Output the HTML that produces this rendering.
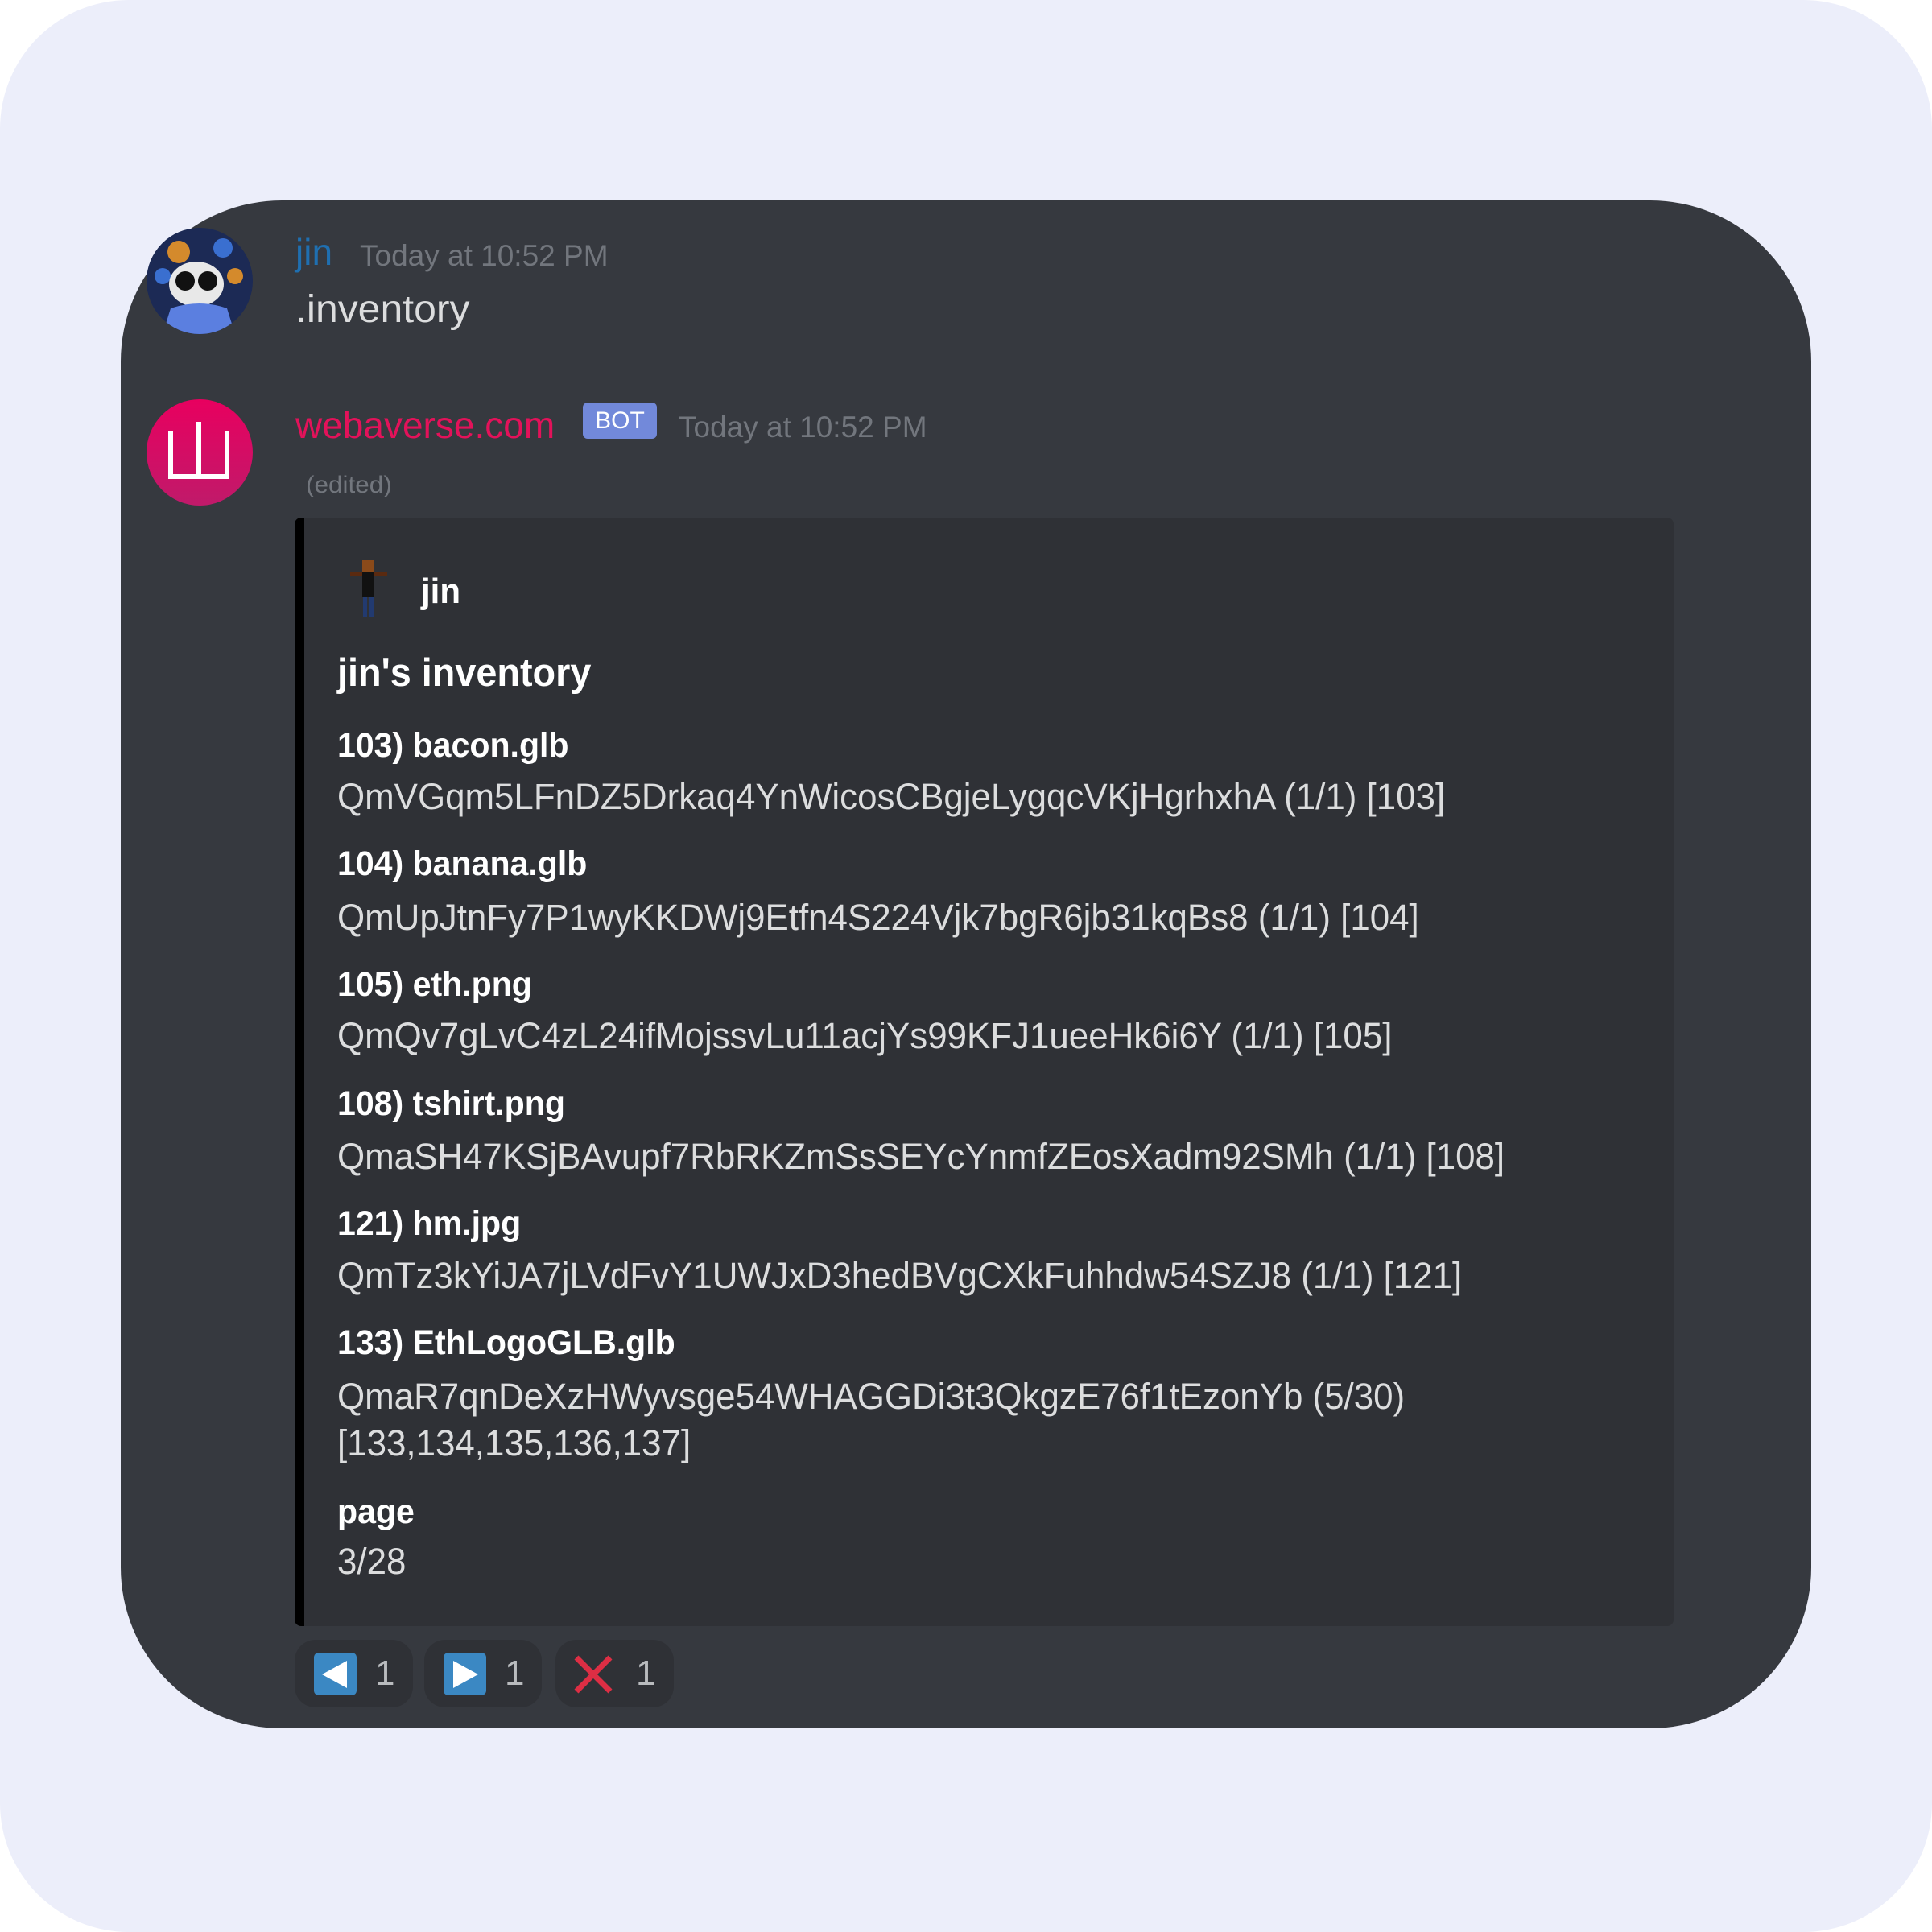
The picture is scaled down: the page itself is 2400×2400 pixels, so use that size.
<!DOCTYPE html>
<html><head><meta charset="utf-8"><style>
html,body{margin:0;padding:0;background:#fff;}
body{width:2400px;height:2400px;position:relative;overflow:hidden;font-family:"Liberation Sans",sans-serif;}
.bg{position:absolute;left:0;top:0;width:2400px;height:2400px;background:#eceefa;border-radius:160px;}
.card{position:absolute;left:150px;top:249px;width:2100px;height:1898px;background:#36393f;border-radius:200px;}
.t{position:absolute;white-space:nowrap;line-height:1;transform-origin:left center;}
.v{color:#dcddde;font-size:45px;transform:scaleX(0.975);}
.n{color:#fff;font-size:43px;font-weight:bold;transform:scaleX(0.955);}
.embed{position:absolute;left:366px;top:643px;width:1713px;height:1377px;background:#2f3136;border-radius:8px;border-left:12px solid #000;box-sizing:border-box;}
.btn{position:absolute;top:2037px;height:84px;background:#2f3136;border-radius:26px;}
.ico{position:absolute;left:24px;top:16px;width:53px;height:53px;background:#3b88c3;border-radius:6px;}
.num{position:absolute;left:100px;top:20px;font-size:44px;color:#b9bbbe;line-height:1;}
</style></head><body>
<div class="bg"></div>
<div class="card"></div>

<svg style="position:absolute;left:182px;top:283px" width="132" height="132" viewBox="0 0 132 132">
<defs><clipPath id="c1"><circle cx="66" cy="66" r="66"/></clipPath></defs>
<g clip-path="url(#c1)">
<rect width="132" height="132" fill="#1c2a55"/>
<circle cx="40" cy="30" r="14" fill="#d48a2c"/><circle cx="95" cy="25" r="12" fill="#3a6fd0"/><circle cx="110" cy="60" r="10" fill="#d48a2c"/><circle cx="20" cy="60" r="10" fill="#3a6fd0"/>
<ellipse cx="62" cy="70" rx="34" ry="28" fill="#e8e8e8"/>
<circle cx="48" cy="66" r="12" fill="#111"/><circle cx="76" cy="66" r="12" fill="#111"/>
<path d="M20 132 L30 100 Q66 88 100 100 L110 132Z" fill="#5b7fe0"/>
</g></svg>
<div class="t" style="left:367px;top:290px;font-size:46px;color:#1f6fb0">jin</div>
<div class="t" style="left:447px;top:299px;font-size:37px;color:#72767d">Today at 10:52 PM</div>
<div class="t" style="left:367px;top:361px;font-size:48px;color:#dcddde;transform:scaleX(1.04)">.inventory</div>

<svg style="position:absolute;left:182px;top:496px" width="132" height="132" viewBox="0 0 132 132">
<defs><linearGradient id="g2" x1="0" y1="0" x2="0" y2="1"><stop offset="0" stop-color="#e8005f"/><stop offset="1" stop-color="#c01a6a"/></linearGradient></defs>
<circle cx="66" cy="66" r="66" fill="url(#g2)"/>
<path d="M30 40 V96 H100 V40 M65 28 V96" fill="none" stroke="#fff" stroke-width="6"/>
</svg>
<div class="t" style="left:367px;top:505px;font-size:46px;color:#e3125a">webaverse.com</div>
<div style="position:absolute;left:724px;top:500px;width:92px;height:45px;background:#7289da;border-radius:6px;color:#fff;font-size:30px;line-height:45px;text-align:center">BOT</div>
<div class="t" style="left:843px;top:512px;font-size:37px;color:#72767d">Today at 10:52 PM</div>
<div class="t" style="left:380px;top:588px;font-size:30px;color:#72767d;transform:scaleX(1.05)">(edited)</div>

<div class="embed"></div>
<svg style="position:absolute;left:429px;top:696px" width="58" height="70" viewBox="0 0 58 70">
<rect x="21" y="0" width="14" height="14" fill="#8a4a1a"/>
<rect x="6" y="15" width="46" height="5" fill="#5a2a10"/>
<rect x="21" y="14" width="14" height="32" fill="#111"/>
<rect x="22" y="46" width="5" height="24" fill="#223a70"/><rect x="30" y="46" width="5" height="24" fill="#223a70"/>
</svg>
<div class="t n" style="left:523px;top:713px;font-size:44px">jin</div>
<div class="t n" style="left:419px;top:812px;font-size:49px">jin's inventory</div>

<div class="t n" style="left:419px;top:905px">103) bacon.glb</div>
<div class="t v" style="left:419px;top:967px">QmVGqm5LFnDZ5Drkaq4YnWicosCBgjeLygqcVKjHgrhxhA (1/1) [103]</div>
<div class="t n" style="left:419px;top:1052px">104) banana.glb</div>
<div class="t v" style="left:419px;top:1117px">QmUpJtnFy7P1wyKKDWj9Etfn4S224Vjk7bgR6jb31kqBs8 (1/1) [104]</div>
<div class="t n" style="left:419px;top:1202px">105) eth.png</div>
<div class="t v" style="left:419px;top:1264px">QmQv7gLvC4zL24ifMojssvLu11acjYs99KFJ1ueeHk6i6Y (1/1) [105]</div>
<div class="t n" style="left:419px;top:1350px">108) tshirt.png</div>
<div class="t v" style="left:419px;top:1414px">QmaSH47KSjBAvupf7RbRKZmSsSEYcYnmfZEosXadm92SMh (1/1) [108]</div>
<div class="t n" style="left:419px;top:1499px">121) hm.jpg</div>
<div class="t v" style="left:419px;top:1562px">QmTz3kYiJA7jLVdFvY1UWJxD3hedBVgCXkFuhhdw54SZJ8 (1/1) [121]</div>
<div class="t n" style="left:419px;top:1647px">133) EthLogoGLB.glb</div>
<div class="t v" style="left:419px;top:1712px">QmaR7qnDeXzHWyvsge54WHAGGDi3t3QkgzE76f1tEzonYb (5/30)</div>
<div class="t v" style="left:419px;top:1770px">[133,134,135,136,137]</div>
<div class="t n" style="left:419px;top:1857px">page</div>
<div class="t v" style="left:419px;top:1917px">3/28</div>

<div class="btn" style="left:366px;width:147px"><div class="ico"><svg width="53" height="53" viewBox="0 0 53 53"><path d="M10 27 L41 10 V44 Z" fill="#fff"/></svg></div><div class="num">1</div></div>
<div class="btn" style="left:527px;width:146px"><div class="ico"><svg width="53" height="53" viewBox="0 0 53 53"><path d="M12 10 L43 27 L12 44 Z" fill="#fff"/></svg></div><div class="num">1</div></div>
<div class="btn" style="left:690px;width:147px"><svg style="position:absolute;left:22px;top:18px" width="50" height="50" viewBox="0 0 50 50"><path d="M4 4 L46 46 M46 4 L4 46" stroke="#dd2e44" stroke-width="7"/></svg><div class="num">1</div></div>
</body></html>
